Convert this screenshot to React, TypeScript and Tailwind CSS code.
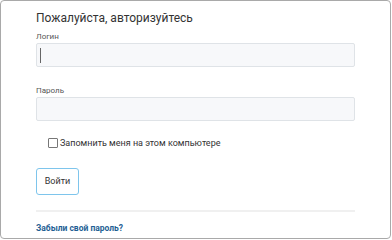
import React from "react";

export default function App() {
  return (
    <div className="w-[392px] h-[240px] bg-white" style={{ fontFamily: "Roboto, 'Noto Sans', sans-serif" }}>
      <div className="w-[391px] h-[239px] border border-[#a9a9a9] rounded-[4px] bg-white pl-[35px] pr-[35px]">
        <div className="pt-[8px] text-[12px] leading-[19px] text-[#333]">Пожалуйста, авторизуйтесь</div>
        <div className="mt-[3px] text-[8px] leading-[12px] text-[#555]">Логин</div>
        <div className="h-[24px] border border-[#dfe3e7] bg-[#f7f8fa] rounded-[2px] flex items-center pl-[3px]">
          <div className="w-px h-[15px] bg-[#666]" />
        </div>
        <div className="mt-[18px] text-[8px] leading-[12px] text-[#555]">Пароль</div>
        <div className="h-[24px] border border-[#dfe3e7] bg-[#f7f8fa] rounded-[2px]" />
        <label className="mt-[15px] ml-[12px] flex items-center gap-[2px] text-[9px] leading-[14px] text-[#333]">
          <span className="w-[10px] h-[10px] border border-[#777] rounded-[1px] bg-white" />
          <span>Запомнить меня на этом компьютере</span>
        </label>
        <button className="mt-[18px] h-[27px] w-[43px] border border-[#7ec5ec] rounded-[3px] bg-white text-[9px] text-[#333] flex items-center justify-center">
          Войти
        </button>
        <div className="mt-[15px] h-[2px] bg-[#f0f0f0]" />
        <div className="mt-[10px] text-[8.5px] leading-[12px] font-bold text-[#1f5f94]">Забыли свой пароль?</div>
      </div>
    </div>
  );
}
